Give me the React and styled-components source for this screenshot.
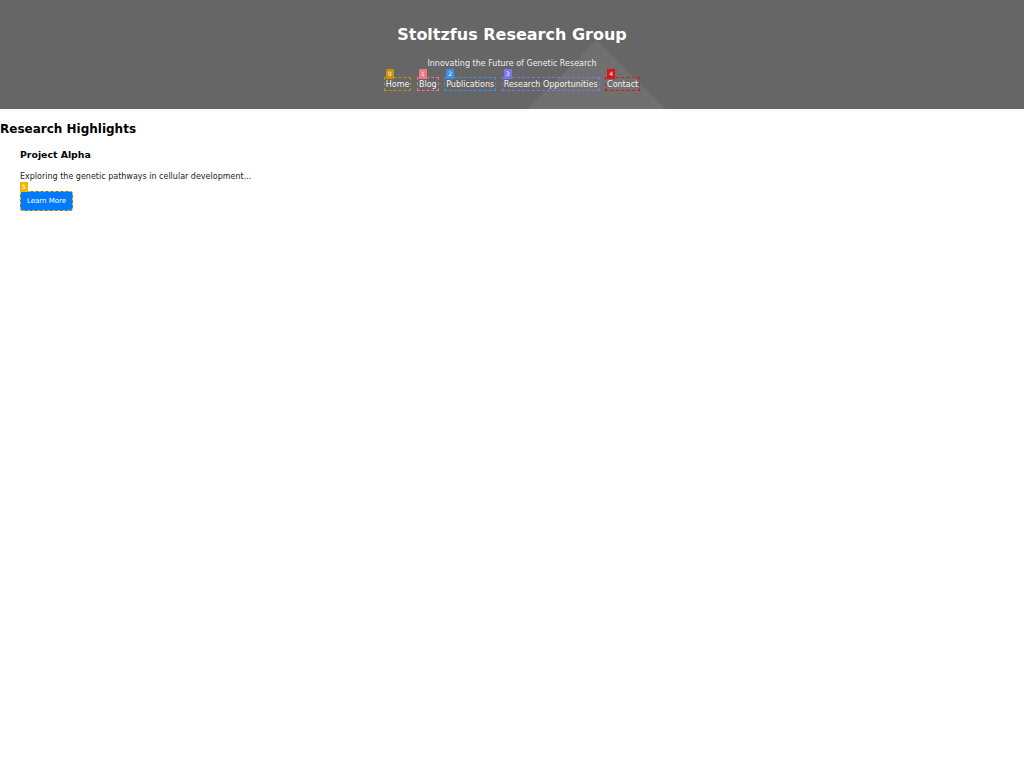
import React from 'react';
import styled, { createGlobalStyle } from 'styled-components';

const GlobalStyle = createGlobalStyle`
    body {
        margin: 0;
        font-family: "DejaVu Sans", Verdana, sans-serif;
        font-size: 8px;
        background: #fff;
        color: #000;
    }
`;

const Header = styled.header`
    position: relative;
    overflow: hidden;
    background: #666666;
    color: #fff;
    text-align: center;
    padding: 25px 0 18px;
`;

const Backdrop = styled.svg`
    position: absolute;
    inset: 0;
    width: 100%;
    height: 100%;
`;

const HeaderContent = styled.div`
    position: relative;
    display: flex;
    flex-direction: column;
    align-items: center;
`;

const Title = styled.h1`
    margin: 0 0 15px;
    font-size: 16px;
    font-weight: bold;
    line-height: normal;
`;

const Tagline = styled.p`
    margin: 0 0 9px;
    font-size: 8px;
    color: #eeeeee;
    line-height: normal;
`;

const Nav = styled.nav`
    display: flex;
    justify-content: center;
    gap: 5.5px;
`;

const NavLink = styled.a`
    position: relative;
    display: block;
    color: #f2f2f2;
    text-decoration: none;
    line-height: normal;
    padding: 1.5px 1px;
    border: 1px dashed ${p => p.$mark};
`;

const Badge = styled.span`
    position: absolute;
    left: ${p => p.$left ?? 1}px;
    bottom: calc(100% - 1px);
    min-width: 8px;
    height: 10px;
    padding: 0 1px;
    box-sizing: border-box;
    background: ${p => p.$mark};
    color: #fff;
    font-size: 6px;
    line-height: 10px;
    text-align: center;
`;

const Main = styled.main`
    padding-top: 13px;
`;

const SectionTitle = styled.h2`
    margin: 0 0 13px;
    font-size: 12px;
    font-weight: bold;
    line-height: normal;
`;

const Card = styled.article`
    padding: 0 20px;
`;

const CardTitle = styled.h3`
    margin: 0 0 12px;
    font-size: 9.36px;
    font-weight: bold;
    line-height: normal;
`;

const CardText = styled.p`
    margin: 0 0 10px;
    color: #222;
    line-height: normal;
`;

const ButtonWrap = styled.div`
    position: relative;
    display: inline-block;
`;

const Button = styled.button`
    display: block;
    width: 53px;
    height: 20px;
    padding: 0;
    background: #007bff;
    color: #fff;
    font-family: "DejaVu Sans", Verdana, sans-serif;
    font-size: 7px;
    border: 1px dashed ${p => p.$mark};
    border-radius: 3px;
    cursor: pointer;
`;

const links = [
    { label: 'Home', mark: '#c8900c' },
    { label: 'Blog', mark: '#f07784' },
    { label: 'Publications', mark: '#3a8fe6' },
    { label: 'Research Opportunities', mark: '#7676ee' },
    { label: 'Contact', mark: '#d41818' }
];

export default function App() {
    return (
        <>
            <GlobalStyle />
            <Header>
                <Backdrop viewBox="0 0 1024 109" preserveAspectRatio="none">
                    <polygon points="597,40 528,109 666,109" fill="#707070" />
                </Backdrop>
                <HeaderContent>
                    <Title>Stoltzfus Research Group</Title>
                    <Tagline>Innovating the Future of Genetic Research</Tagline>
                    <Nav>
                        {links.map((link, idx) => (
                            <NavLink key={link.label} href="#" $mark={link.mark}>
                                <Badge $mark={link.mark}>{idx}</Badge>
                                {link.label}
                            </NavLink>
                        ))}
                    </Nav>
                </HeaderContent>
            </Header>
            <Main>
                <SectionTitle>Research Highlights</SectionTitle>
                <Card>
                    <CardTitle>Project Alpha</CardTitle>
                    <CardText>Exploring the genetic pathways in cellular development...</CardText>
                    <ButtonWrap>
                        <Badge $mark="#f2b705" $left={0}>5</Badge>
                        <Button $mark="#f2b705">Learn More</Button>
                    </ButtonWrap>
                </Card>
            </Main>
        </>
    );
}
